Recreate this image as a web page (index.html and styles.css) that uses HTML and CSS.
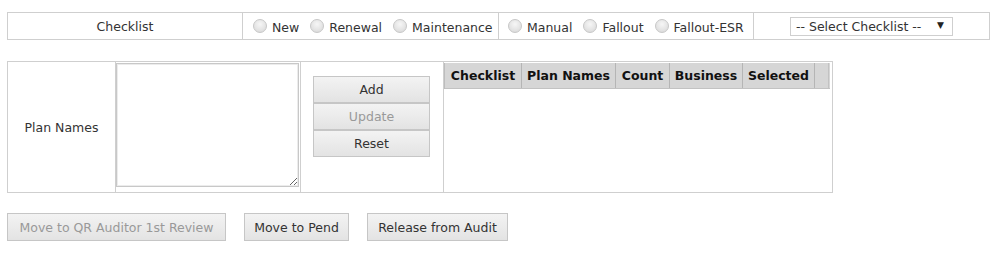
FILE: index.html
```html
<!DOCTYPE html>
<html>
<head>
<meta charset="utf-8">
<link rel="stylesheet" href="styles.css">
</head>
<body>
<table class="top">
  <colgroup>
    <col class="tc1"><col class="tc2"><col class="tc3"><col class="tc4">
  </colgroup>
  <tr>
    <td class="c-label">Checklist</td>
    <td class="c-radios">
      <div class="radios">
        <label class="opt"><input type="radio" name="t1">New</label>
        <label class="opt"><input type="radio" name="t1">Renewal</label>
        <label class="opt"><input type="radio" name="t1">Maintenance</label>
      </div>
    </td>
    <td class="c-radios2">
      <div class="radios">
        <label class="opt"><input type="radio" name="t2">Manual</label>
        <label class="opt"><input type="radio" name="t2">Fallout</label>
        <label class="opt"><input type="radio" name="t2">Fallout-ESR</label>
      </div>
    </td>
    <td class="c-select">
      <div class="sel-wrap">
        <select class="sel"><option>-- Select Checklist --</option></select>
        <span class="sel-arrow">▼</span>
      </div>
    </td>
  </tr>
</table>

<table class="mid">
  <colgroup>
    <col class="mc1"><col class="mc2"><col class="mc3"><col class="mc4">
  </colgroup>
  <tr>
    <td class="m-label">Plan Names</td>
    <td class="m-text"><textarea class="ta"></textarea></td>
    <td class="m-btns">
      <div class="stack">
        <button class="btn sbtn">Add</button>
        <button class="btn sbtn" disabled>Update</button>
        <button class="btn sbtn">Reset</button>
      </div>
    </td>
    <td class="m-grid">
      <div class="grid">
        <div class="gh">
          <div class="gc w1">Checklist</div>
          <div class="gc w2">Plan Names</div>
          <div class="gc w3">Count</div>
          <div class="gc w4">Business</div>
          <div class="gc w5">Selected</div>
          <div class="gc w6"></div>
        </div>
      </div>
    </td>
  </tr>
</table>

<div class="actions">
  <button class="btn abtn b-review" disabled>Move to QR Auditor 1st Review</button>
  <button class="btn abtn b-pend">Move to Pend</button>
  <button class="btn abtn b-release">Release from Audit</button>
</div>
</body>
</html>
```

FILE: styles.css
```css
html, body {
  margin: 0;
  padding: 0;
  background: #fff;
}
body {
  padding: 12px 7px 0 7px;
  font-family: "DejaVu Sans", Verdana, sans-serif;
  font-size: 12.5px;
  color: #333;
}
table {
  border-collapse: collapse;
  table-layout: fixed;
}
td {
  border: 1px solid #cfcfcf;
  padding: 0;
}
.top {
  width: 982px;
  height: 28px;
}
.tc1 { width: 235px; }
.tc2 { width: 256px; }
.tc3 { width: 255px; }
.tc4 { width: 236px; }
.c-label {
  text-align: center;
  padding-top: 1px;
}
.c-radios {
  padding-left: 10px;
  padding-top: 3px;
}
.c-radios2 {
  padding-left: 9px;
  padding-top: 3px;
}
.c-select {
  padding-left: 36px;
}
.radios {
  display: flex;
  gap: 11px;
  align-items: center;
  white-space: nowrap;
}
.opt {
  display: flex;
  align-items: center;
  gap: 5px;
}
.opt input {
  appearance: none;
  -webkit-appearance: none;
  margin: 0;
  width: 14px;
  height: 14px;
  border-radius: 50%;
  border: 1px solid #c8c8c8;
  background: radial-gradient(circle at 50% 35%, #f6f6f6 0%, #e0e0e0 70%, #d3d3d3 100%);
  position: relative;
  top: -2px;
}
.sel-wrap {
  position: relative;
  width: 163px;
  height: 19px;
}
.sel {
  appearance: none;
  -webkit-appearance: none;
  width: 163px;
  height: 19px;
  border: 1px solid #cfcfcf;
  background: #fff;
  font-family: "DejaVu Sans", Verdana, sans-serif;
  font-size: 12.5px;
  color: #333;
  padding: 0 0 0 5px;
  margin: 0;
  line-height: 17px;
  border-radius: 0;
}
.sel-arrow {
  position: absolute;
  right: 9px;
  top: 3px;
  font-size: 9px;
  color: #222;
  pointer-events: none;
}

.mid {
  margin-top: 21px;
  width: 825px;
  height: 132px;
}
.mc1 { width: 108px; }
.mc2 { width: 185px; }
.mc3 { width: 143px; }
.mc4 { width: 389px; }
.m-label {
  text-align: center;
}
.m-text {
  vertical-align: top;
  padding: 1px 0 0 0;
}
.ta {
  display: block;
  box-sizing: border-box;
  width: 183px;
  height: 124px;
  border: 1px solid #c8c8c8;
  box-shadow: inset 0 0 0 1px #ececec;
  margin: 0;
  resize: both;
}
.m-btns {
  vertical-align: top;
  padding: 14px 0 0 12px;
}
.stack {
  display: flex;
  flex-direction: column;
  width: 117px;
}
.btn {
  font-family: "DejaVu Sans", Verdana, sans-serif;
  font-size: 12.5px;
  color: #333;
  background: linear-gradient(#f3f3f3, #e3e3e3);
  border: 1px solid #c6c6c6;
  border-radius: 0;
  margin: 0;
  cursor: pointer;
}
.btn:disabled {
  color: #999;
}
.sbtn {
  height: 27px;
  width: 117px;
  padding: 0;
}
.m-grid {
  vertical-align: top;
  padding: 1px 0 0 0;
}
.grid {
  border-left: 1px solid #bdbdbd;
  width: 385px;
}
.gh {
  display: flex;
  height: 26px;
  background: #d6d6d6;
  border-bottom: 1px solid #c2c2c2;
  box-sizing: border-box;
}
.gc {
  box-sizing: border-box;
  font-family: "DejaVu Sans", Verdana, sans-serif;
  font-weight: bold;
  font-size: 12.5px;
  color: #111;
  display: flex;
  align-items: center;
  justify-content: center;
  border-right: 1px solid #b5b5b5;
  white-space: nowrap;
}
.w1 { width: 77px; }
.w2 { width: 94px; }
.w3 { width: 54px; }
.w4 { width: 73px; }
.w5 { width: 72px; }
.w6 { width: 14px; border-right: 1px solid #c2c2c2; }

.actions {
  display: flex;
  gap: 18px;
  margin-top: 20px;
}
.abtn {
  height: 28px;
  padding: 0;
}
.b-review { width: 219px; }
.b-pend { width: 105px; }
.b-release { width: 141px; }
```
